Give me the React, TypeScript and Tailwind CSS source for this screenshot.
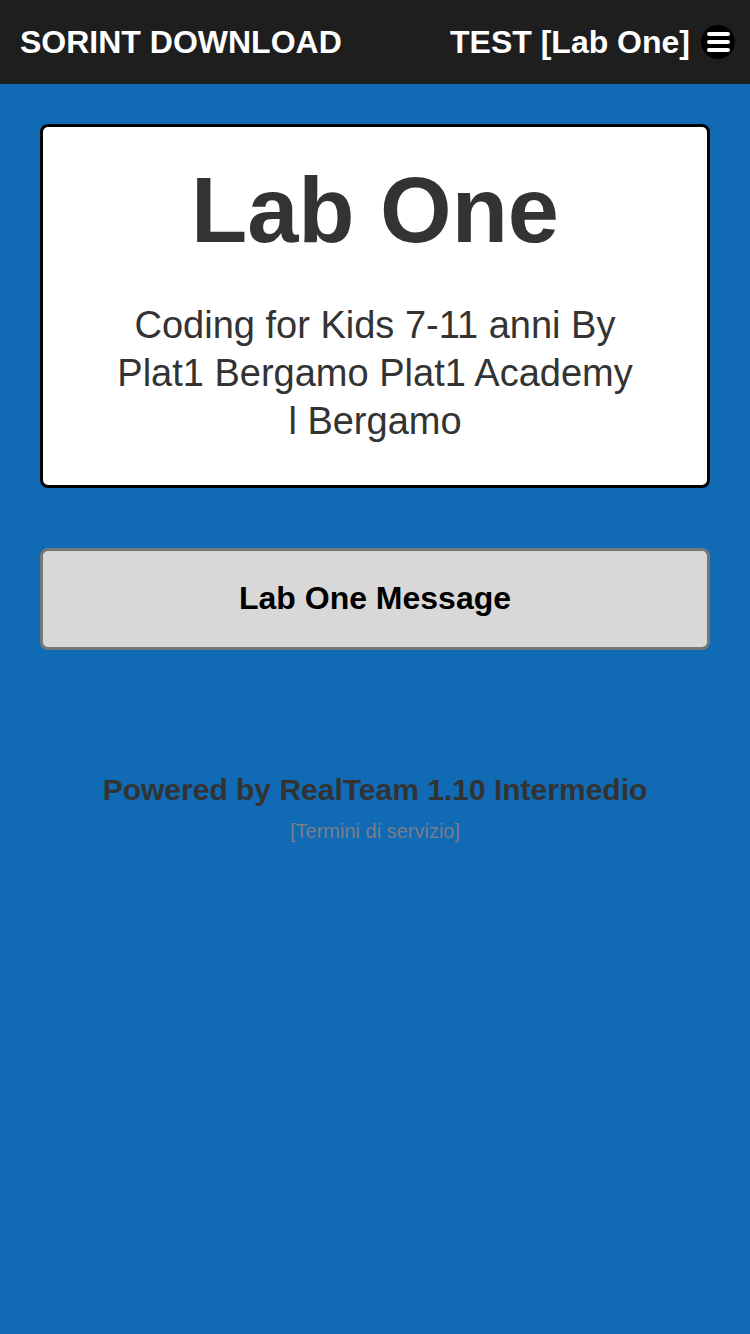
export default function App() {
  return (
    <div
      className="min-h-[1334px] w-full bg-[#106ab4]"
      style={{ fontFamily: '"Liberation Sans", Arial, sans-serif' }}
    >
      {/* Header */}
      <header className="flex h-[84px] items-center justify-between bg-[#1e1e1e] pl-5 pr-[15px]">
        <h1 className="text-[32px] font-bold leading-none text-white">SORINT DOWNLOAD</h1>
        <div className="flex items-center gap-[11px]">
          <span className="text-[32px] font-bold leading-none text-white">TEST [Lab One]</span>
          <button className="flex h-[34px] w-[34px] flex-col items-center justify-center gap-[4px] rounded-full bg-black">
            <span className="block h-[4px] w-[23px] rounded-full bg-white" />
            <span className="block h-[4px] w-[23px] rounded-full bg-white" />
            <span className="block h-[4px] w-[23px] rounded-full bg-white" />
          </button>
        </div>
      </header>

      <main className="flex flex-col px-10 pt-10">
        {/* Title card */}
        <div className="flex h-[364px] flex-col items-center rounded-lg border-[3px] border-black bg-white px-[70px] pt-[33px] text-center text-[#333]">
          <h2 className="text-[92px] font-bold leading-[1.1]">Lab One</h2>
          <p className="mt-[40px] text-[38px] leading-[48px]">
            Coding for Kids 7-11 anni By Plat1 Bergamo Plat1 Academy l Bergamo
          </p>
        </div>

        {/* Message button */}
        <button className="mt-[60px] flex h-[102px] items-center justify-center rounded-lg border-[3px] border-[#777] bg-[#d8d8d8] pb-[3px] text-[32px] font-bold text-black">
          Lab One Message
        </button>

        {/* Footer */}
        <footer className="mt-[122px] flex flex-col items-center">
          <p className="text-[30px] font-bold leading-[36px] text-[#333]">Powered by RealTeam 1.10 Intermedio</p>
          <a className="mt-[11px] text-[20px] leading-[24px] text-[#7a7d8c]">[Termini di servizio]</a>
        </footer>
      </main>
    </div>
  );
}
